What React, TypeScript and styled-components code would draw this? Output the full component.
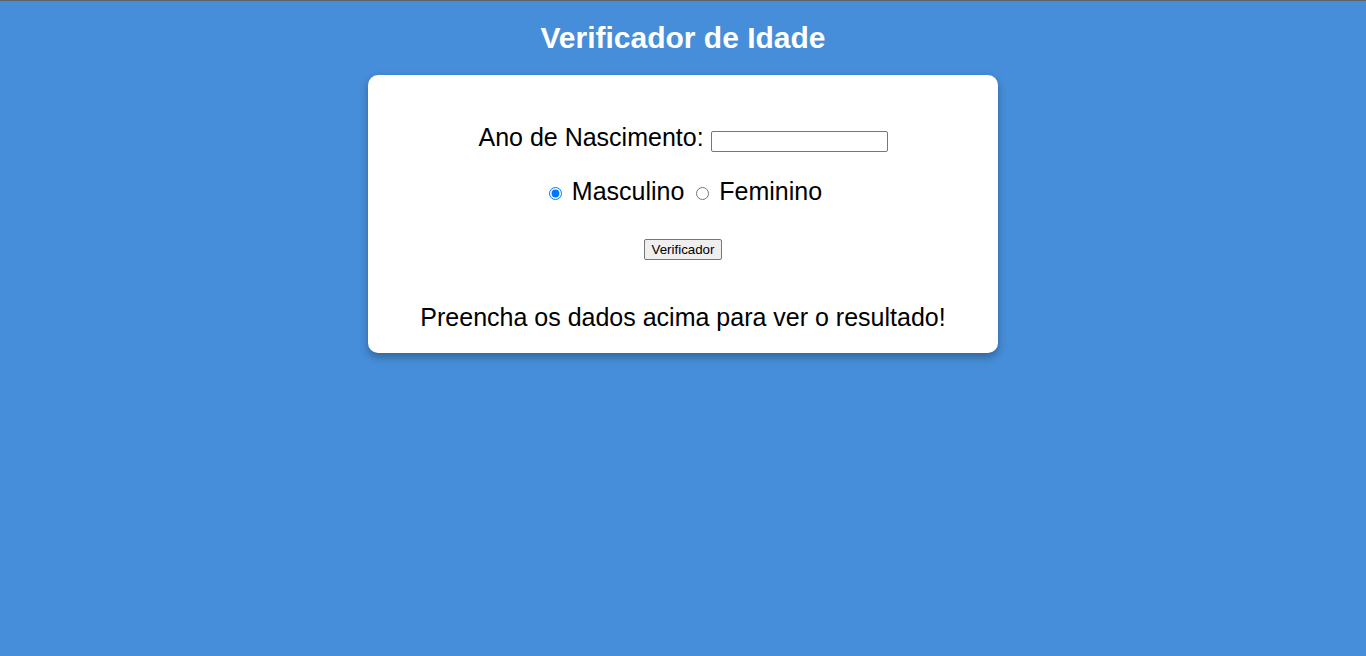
import React from "react";
import styled, { createGlobalStyle } from "styled-components";

const GlobalStyle = createGlobalStyle`
  html, body {
    margin: 0;
    padding: 0;
    background: #468ed9;
  }
  body {
    font-family: "Liberation Sans", Arial, sans-serif;
  }
`;

const Page = styled.main`
  min-height: 656px;
  box-sizing: border-box;
  border-top: 1px solid #5f6368;
  display: flex;
  flex-direction: column;
  align-items: center;
  font-family: "Liberation Sans", Arial, sans-serif;
`;

const Title = styled.h1`
  margin: 19px 0 19px;
  font-size: 30px;
  line-height: 36px;
  font-weight: 700;
  color: #ffffff;
`;

const Card = styled.section`
  box-sizing: border-box;
  width: 630px;
  padding: 47px 20px 21px;
  background: #ffffff;
  border-radius: 10px;
  box-shadow: 0 4px 8px rgba(0, 0, 0, 0.3);
  text-align: center;
  color: #000000;
`;

const Row = styled.div<{ $gap?: number }>`
  margin-top: ${(p) => p.$gap ?? 0}px;
  font-size: 25px;
  line-height: 30px;
`;

const TextInput = styled.input`
  box-sizing: border-box;
  width: 177px;
  height: 21px;
  padding: 1px 2px;
  border: 1px solid #767676;
  border-radius: 2px;
  font-family: "Liberation Sans", Arial, sans-serif;
  font-size: 13.33px;
  background: #ffffff;
  vertical-align: baseline;
`;

const Radio = styled.input`
  width: 13px;
  height: 13px;
  margin: 3px 3px 0 5px;
  accent-color: #0075ff;
`;

const Button = styled.button`
  display: block;
  box-sizing: border-box;
  margin: 33px auto 0;
  height: 21px;
  padding: 1px 7px;
  border: 1px solid #767676;
  border-radius: 2px;
  background: #efefef;
  color: #000000;
  font-family: "Liberation Sans", Arial, sans-serif;
  font-size: 13.33px;
  line-height: 15px;
`;

export default function App() {
  return (
    <>
      <GlobalStyle />
      <Page>
        <Title>Verificador de Idade</Title>
        <Card>
          <Row>
            Ano de Nascimento: <TextInput type="number" aria-label="Ano de Nascimento" />
          </Row>
          <Row $gap={24}>
            <Radio type="radio" name="sexo" id="masc" defaultChecked />{" "}
            <label htmlFor="masc">Masculino</label>{" "}
            <Radio type="radio" name="sexo" id="fem" />{" "}
            <label htmlFor="fem">Feminino</label>
          </Row>
          <Button type="button">Verificador</Button>
          <Row $gap={42}>Preencha os dados acima para ver o resultado!</Row>
        </Card>
      </Page>
    </>
  );
}
